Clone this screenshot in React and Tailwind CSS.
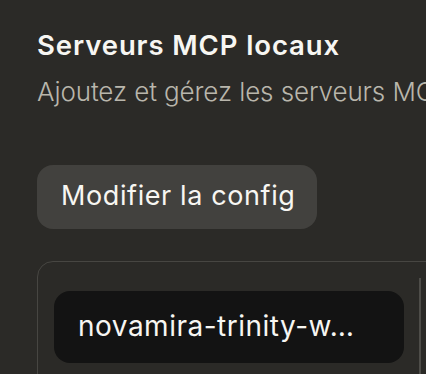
import React from 'react';

export default function App() {
    return (
        <div className="w-[426px] h-[374px] overflow-hidden bg-[#2b2a27] font-['Inter',sans-serif] pl-[37px] pt-[28px]">
            {/* Header */}
            <h2 className="text-[27.5px] leading-[34px] font-semibold text-[#f7f6f2] tracking-[0.9px] whitespace-nowrap">
                Serveurs MCP locaux
            </h2>
            <p className="mt-[14px] text-[26px] leading-[32px] font-light text-[#b9b6ac] tracking-[-0.1px] whitespace-nowrap">
                Ajoutez et gérez les serveurs MCP locaux sur votre ordinateur.
            </p>

            {/* Edit config */}
            <button className="mt-[57px] h-[64px] w-[280px] rounded-[16px] bg-[#42413e] text-[27px] font-normal text-[#f7f6f2] tracking-[0.6px] text-left pl-[24px] pb-[2px] whitespace-nowrap">
                Modifier la config
            </button>

            {/* Server list card */}
            <div className="mt-[32px] w-[480px] h-[160px] rounded-[16px] border border-[#474642] flex">
                <div className="pl-[16px] pt-[29px] pr-[15px]">
                    <div className="w-[350px] h-[72px] rounded-[16px] bg-[#131313] flex items-center pl-[24px] pb-[3px]">
                        <span className="text-[28px] text-[#f7f6f2] tracking-[0.5px] whitespace-nowrap">novamira-trinity-w…</span>
                    </div>
                </div>
                <div className="mt-[16px] flex-1 border-l-2 border-[#4e4d49]" />
            </div>
        </div>
    );
}
